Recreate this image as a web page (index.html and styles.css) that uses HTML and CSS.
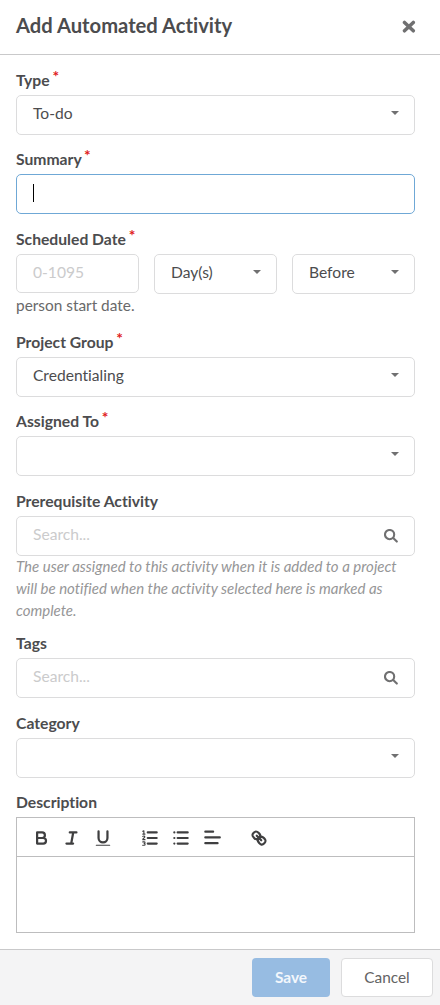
FILE: index.html
```html
<!DOCTYPE html>
<html lang="en">
<head>
  <meta charset="UTF-8" />
  <title>Add Automated Activity</title>
  <meta name="viewport" content="width=device-width, initial-scale=1.0" />
  <link rel="stylesheet" href="styles.css">
</head>
<body>
  <div class="modal">
    <header class="modal-header">
      <h2>Add Automated Activity</h2>
      <button type="button" class="close" aria-label="Close">
        <svg viewBox="0 0 14 14"><path d="M2.5 3.4l8.8 8.4M11.3 3.4l-8.8 8.4" /></svg>
      </button>
    </header>

    <form class="modal-body" id="activityForm">
      <div class="field">
        <label>Type <span class="required">*</span></label>
        <div class="control"><span>To-do</span><i class="caret"></i></div>
      </div>

      <div class="field">
        <label>Summary <span class="required">*</span></label>
        <div class="control focused"><span class="cursor"></span></div>
      </div>

      <div class="field schedule">
        <label>Scheduled Date <span class="required">*</span></label>
        <div class="row">
          <div class="control short"><span class="placeholder">0-1095</span></div>
          <div class="control"><span>Day(s)</span><i class="caret"></i></div>
          <div class="control"><span>Before</span><i class="caret"></i></div>
        </div>
        <p class="note">person start date.</p>
      </div>

      <div class="field">
        <label>Project Group <span class="required">*</span></label>
        <div class="control"><span>Credentialing</span><i class="caret"></i></div>
      </div>

      <div class="field">
        <label class="clipped">Assigned To <span class="required">*</span></label>
        <div class="control"><span></span><i class="caret"></i></div>
      </div>

      <div class="field prerequisite">
        <label>Prerequisite Activity</label>
        <div class="control">
          <span class="placeholder">Search...</span>
          <svg class="search" viewBox="0 0 14 14"><circle cx="5.6" cy="5.6" r="4.6" /><path d="M9.2 9l3.6 3.6" /></svg>
        </div>
        <p class="help">The user assigned to this activity when it is added to a project will be notified when the activity selected here is marked as complete.</p>
      </div>

      <div class="field">
        <label class="clipped">Tags</label>
        <div class="control">
          <span class="placeholder">Search...</span>
          <svg class="search" viewBox="0 0 14 14"><circle cx="5.6" cy="5.6" r="4.6" /><path d="M9.2 9l3.6 3.6" /></svg>
        </div>
      </div>

      <div class="field">
        <label>Category</label>
        <div class="control"><span></span><i class="caret"></i></div>
      </div>

      <div class="field">
        <label>Description</label>
        <div class="editor">
          <div class="toolbar">
            <div class="group">
              <svg viewBox="0 0 18 18"><path d="M5.5 4H10a2.5 2.5 0 0 1 0 5H5.5zM5.5 9H11a2.5 2.5 0 0 1 0 5H5.5z" /></svg>
              <svg viewBox="0 0 18 18"><path d="M7 4h6M4 14h6M8.3 14l1.8-10" /></svg>
              <svg viewBox="0 0 18 18"><path d="M5 3v6a4 4 0 0 0 8 0V3" /><path class="thin" d="M3 15.5h12" /></svg>
            </div>
            <div class="group">
              <svg viewBox="0 0 18 18">
                <path d="M7 4h8M7 9h8M7 14h8" />
                <path class="thin" d="M2.5 5.5h2M3.5 5.5v-3l-1 .5M2.5 7.6c.7-.7 2-.3 1.8.6-.2.8-1.8 1.1-1.8 2.3h2M2.5 12.5h1.2c1.1 0 1.1 1.5 0 1.5 1.2 0 1.2 1.5 0 1.5H2.4" />
              </svg>
              <svg viewBox="0 0 18 18"><path d="M6 4h9M6 9h9M6 14h9M3 4h0M3 9h0M3 14h0" /></svg>
              <svg viewBox="0 0 18 18"><path d="M3 3.3h7M3 8.5h13M3 13.7h11" /></svg>
            </div>
            <div class="group">
              <svg viewBox="0 0 18 18">
                <path d="M7 7l4 4" />
                <path d="M8.9 4.577a3.476 3.476 0 0 1 .36 4.679A3.476 3.476 0 0 1 4.577 8.9C3.185 7.5 2.035 6.4 4.217 4.217S7.5 3.185 8.9 4.577z" />
                <path d="M13.423 9.1a3.476 3.476 0 0 0-4.679-.36 3.476 3.476 0 0 0 .36 4.679c1.392 1.392 2.5 2.542 4.679.36s1.031-3.287-.36-4.679z" />
              </svg>
            </div>
          </div>
          <div class="editor-text"></div>
        </div>
      </div>
    </form>

    <footer class="modal-footer">
      <button type="button" class="btn save">Save</button>
      <button type="button" class="btn cancel">Cancel</button>
    </footer>
  </div>
</body>
</html>
```

FILE: styles.css
```css
* {
  box-sizing: border-box;
  font-family: Lato, 'Helvetica Neue', Arial, sans-serif;
  margin: 0;
  padding: 0;
}

body {
  background-color: #fff;
  color: #4c4c4e;
  font-size: 15.4px;
  font-variant-ligatures: none;
}

.modal {
  display: flex;
  flex-direction: column;
  height: 1005px;
  overflow: hidden;
}

/* Header */
.modal-header {
  display: flex;
  justify-content: space-between;
  align-items: center;
  flex: none;
  height: 55px;
  padding: 0 24px 2px 16px;
  border-bottom: 1px solid #c9c9ca;
}

.modal-header h2 {
  font-size: 20.2px;
  line-height: 28px;
  padding-bottom: 2px;
}

.close {
  border: none;
  background: none;
  height: 14px;
}

.close svg {
  display: block;
  width: 14px;
  height: 14px;
  stroke: #707071;
  stroke-width: 3.5;
  stroke-linecap: round;
}

/* Form */
.modal-body {
  flex: 1;
  padding: 18px 25px 0 16px;
}

.field {
  margin-bottom: 17.4px;
}

.field:last-child {
  margin-bottom: 0;
}

label {
  display: block;
  height: 22px;
  font-size: 15.7px;
  line-height: 15px;
  font-weight: bold;
  white-space: nowrap;
}

.clipped {
  clip-path: inset(-10px 0 6px);
}

.required {
  position: relative;
  top: -4px;
  left: -1px;
  color: #e01b1b;
}

.control {
  display: flex;
  justify-content: space-between;
  align-items: center;
  height: 40px;
  padding: 0 15px 4px 16px;
  border: 1px solid #dcdcdd;
  border-radius: 5px;
  font-size: 15.6px;
}

.control.focused {
  padding-bottom: 2px;
  border-color: #6fa8d6;
}

.cursor {
  width: 1px;
  height: 18px;
  background-color: #000;
}

.placeholder {
  color: #cbcbcc;
}

.caret {
  border: 4px solid transparent;
  border-top: 4px solid #707071;
  border-bottom: none;
}

.search {
  width: 14px;
  height: 14px;
  margin-right: 1px;
  fill: none;
  stroke: #707071;
  stroke-width: 2.1;
  stroke-linecap: round;
  position: relative;
  top: 2px;
}

.schedule {
  margin-bottom: 17px;
}

.row {
  display: grid;
  grid-template-columns: repeat(3, 1fr);
  gap: 15px;
}

.short {
  height: 39px;
  padding-bottom: 2px;
}

.note {
  height: 24px;
  line-height: 23px;
  color: #69696a;
}

.prerequisite {
  margin-bottom: 15.6px;
}

.help {
  margin-top: -1px;
  font-size: 15px;
  line-height: 22px;
  font-style: italic;
  color: #969697;
}

/* Editor */
.editor {
  height: 116px;
  border: 1px solid #bdbdbe;
}

.toolbar {
  display: flex;
  gap: 27px;
  height: 39px;
  padding: 10px 0 0 14px;
  border-bottom: 1px solid #bdbdbe;
}

.group {
  display: flex;
  gap: 11px;
}

.toolbar svg {
  width: 20px;
  height: 20px;
  fill: none;
  stroke: #3f3f40;
  stroke-width: 2;
  stroke-linecap: round;
  stroke-linejoin: round;
}

.toolbar .thin {
  stroke-width: 1;
}

/* Footer */
.modal-footer {
  display: flex;
  justify-content: flex-end;
  gap: 11px;
  flex: none;
  height: 56px;
  padding: 8px 7px 8px 0;
  background-color: #f4f4f5;
  border-top: 1px solid #c9c9ca;
}

.btn {
  height: 39px;
  border: none;
  border-radius: 4px;
  font-size: 15.4px;
  padding-bottom: 1px;
}

.save {
  width: 78px;
  background-color: #97bce2;
  color: #f3f7fc;
  font-weight: bold;
}

.cancel {
  width: 92px;
  border: 1px solid #dcdcdd;
  background-color: #fff;
  color: #636364;
}
```
